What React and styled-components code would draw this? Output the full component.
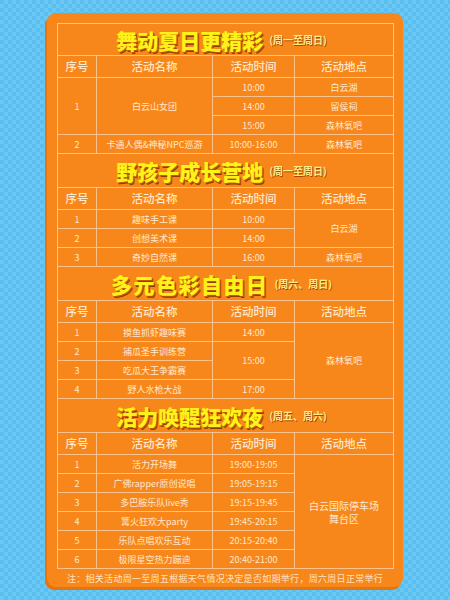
import React from 'react';
import styled, { createGlobalStyle } from 'styled-components';

const GlobalStyle = createGlobalStyle`
  html, body {
    margin: 0;
    padding: 0;
  }
  body {
    font-family: "Noto Sans CJK SC", "Noto Sans", sans-serif;
  }
`;

const Page = styled.div`
  width: 450px;
  height: 600px;
  box-sizing: border-box;
  padding-top: 13px;
  background-color: #58bff0;
  background-image: linear-gradient(
      45deg,
      rgba(255, 255, 255, 0.12) 25%,
      transparent 25%,
      transparent 75%,
      rgba(255, 255, 255, 0.12) 75%
    ),
    linear-gradient(
      45deg,
      rgba(255, 255, 255, 0.12) 25%,
      transparent 25%,
      transparent 75%,
      rgba(255, 255, 255, 0.12) 75%
    );
  background-size: 8px 8px;
  background-position: 0 0, 4px 4px;
  overflow: hidden;
`;

const Card = styled.div`
  width: 356px;
  height: 574px;
  margin-left: 47px;
  box-sizing: border-box;
  padding: 10px 10px 0;
  background: #f8871b;
  border-radius: 9px;
  box-shadow: -2px 3px 0 #e5730e;
  display: flex;
  flex-direction: column;
`;

const Table = styled.table`
  border-collapse: collapse;
  table-layout: fixed;
  width: 336px;
  color: #ffe7cc;
`;

const Cell = styled.td`
  border: 1px solid #fcc48c;
  padding: 0;
  height: 18px;
  text-align: center;
  font-size: 9px;
  line-height: 11px;
  white-space: nowrap;
`;

const HeadCell = styled(Cell)`
  height: 21px;
  font-size: 11.5px;
  font-weight: 500;
`;

const TitleCell = styled.td`
  border: 1px solid #fcc48c;
  height: ${(p) => (p.$first ? 31 : 33)}px;
  padding: 0 8px 0 0;
  text-align: center;
  white-space: nowrap;
`;

const TitleText = styled.span`
  font-size: 21px;
  font-weight: 900;
  letter-spacing: ${(p) => (p.$wide ? '1.5px' : '0')};
  color: #fff21a;
  text-shadow: 1px 1px 0 #c35a00, 1.5px 1.5px 0 #8c3d00, -0.5px -0.5px 0 #e0a000;
  vertical-align: middle;
`;

const SubText = styled.span`
  font-size: 10px;
  font-weight: 700;
  color: #ffec8a;
  margin-left: 6px;
  text-shadow: 0.7px 0.7px 0 #a24800;
  vertical-align: middle;
`;

const Note = styled.div`
  flex: 1;
  display: flex;
  align-items: center;
  justify-content: center;
  font-size: 9px;
  color: #ffe3c4;
  letter-spacing: 0.3px;
  white-space: nowrap;
`;

const Multiline = styled.span`
  white-space: pre-line;
  font-size: 10px;
  line-height: 13px;
`;

const sections = [
  {
    title: '舞动夏日更精彩',
    sub: '(周一至周日)',
    rows: [
      [
        { t: '1', rs: 3 },
        { t: '白云山女团', rs: 3 },
        { t: '10:00' },
        { t: '白云湖' },
      ],
      [{ t: '14:00' }, { t: '留侯祠' }],
      [{ t: '15:00' }, { t: '森林氧吧' }],
      [{ t: '2' }, { t: '卡通人偶&神秘NPC巡游' }, { t: '10:00-16:00' }, { t: '森林氧吧' }],
    ],
  },
  {
    title: '野孩子成长营地',
    sub: '(周一至周日)',
    rows: [
      [{ t: '1' }, { t: '趣味手工课' }, { t: '10:00' }, { t: '白云湖', rs: 2 }],
      [{ t: '2' }, { t: '创想美术课' }, { t: '14:00' }],
      [{ t: '3' }, { t: '奇妙自然课' }, { t: '16:00' }, { t: '森林氧吧' }],
    ],
  },
  {
    title: '多元色彩自由日',
    sub: '(周六、周日)',
    wide: true,
    rows: [
      [{ t: '1' }, { t: '摸鱼抓虾趣味赛' }, { t: '14:00' }, { t: '森林氧吧', rs: 4 }],
      [{ t: '2' }, { t: '捕瓜圣手训练营' }, { t: '15:00', rs: 2 }],
      [{ t: '3' }, { t: '吃瓜大王争霸赛' }],
      [{ t: '4' }, { t: '野人水枪大战' }, { t: '17:00' }],
    ],
  },
  {
    title: '活力唤醒狂欢夜',
    sub: '(周五、周六)',
    rows: [
      [
        { t: '1' },
        { t: '活力开场舞' },
        { t: '19:00-19:05' },
        { t: '白云国际停车场\n舞台区', rs: 6 },
      ],
      [{ t: '2' }, { t: '广佛rapper原创说唱' }, { t: '19:05-19:15' }],
      [{ t: '3' }, { t: '多巴胺乐队live秀' }, { t: '19:15-19:45' }],
      [{ t: '4' }, { t: '篝火狂欢大party' }, { t: '19:45-20:15' }],
      [{ t: '5' }, { t: '乐队点唱欢乐互动' }, { t: '20:15-20:40' }],
      [{ t: '6' }, { t: '极限星空热力蹦迪' }, { t: '20:40-21:00' }],
    ],
  },
];

const headers = ['序号', '活动名称', '活动时间', '活动地点'];

function Section({ section, first }) {
  return (
    <>
      <tr>
        <TitleCell colSpan={4} $first={first}>
          <TitleText $wide={section.wide}>{section.title}</TitleText>
          <SubText>{section.sub}</SubText>
        </TitleCell>
      </tr>
      <tr>
        {headers.map((h) => (
          <HeadCell key={h}>{h}</HeadCell>
        ))}
      </tr>
      {section.rows.map((row, i) => (
        <tr key={i}>
          {row.map((c, j) => (
            <Cell key={j} rowSpan={c.rs || 1}>
              {c.t.includes('\n') ? <Multiline>{c.t}</Multiline> : c.t}
            </Cell>
          ))}
        </tr>
      ))}
    </>
  );
}

export default function App() {
  return (
    <>
      <GlobalStyle />
      <Page>
        <Card>
          <Table>
            <colgroup>
              <col style={{ width: 39 }} />
              <col style={{ width: 116 }} />
              <col style={{ width: 82 }} />
              <col style={{ width: 99 }} />
            </colgroup>
            <tbody>
              {sections.map((s, i) => (
                <Section key={s.title} section={s} first={i === 0} />
              ))}
            </tbody>
          </Table>
          <Note>注：相关活动周一至周五根据天气情况决定是否如期举行，周六周日正常举行</Note>
        </Card>
      </Page>
    </>
  );
}
